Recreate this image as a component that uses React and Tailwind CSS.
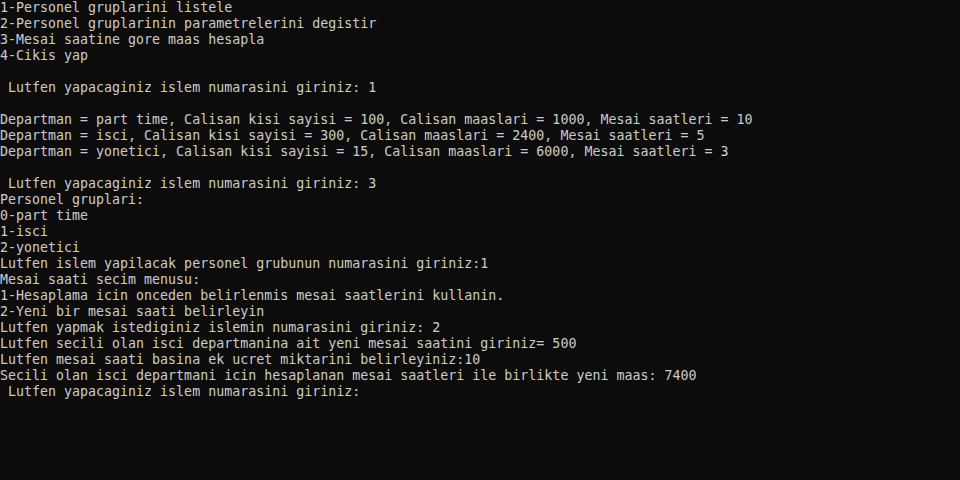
const lines = [
  '1-Personel gruplarini listele',
  '2-Personel gruplarinin parametrelerini degistir',
  '3-Mesai saatine gore maas hesapla',
  '4-Cikis yap',
  '',
  ' Lutfen yapacaginiz islem numarasini giriniz: 1',
  '',
  'Departman = part time, Calisan kisi sayisi = 100, Calisan maaslari = 1000, Mesai saatleri = 10',
  'Departman = isci, Calisan kisi sayisi = 300, Calisan maaslari = 2400, Mesai saatleri = 5',
  'Departman = yonetici, Calisan kisi sayisi = 15, Calisan maaslari = 6000, Mesai saatleri = 3',
  '',
  ' Lutfen yapacaginiz islem numarasini giriniz: 3',
  'Personel gruplari:',
  '0-part time',
  '1-isci',
  '2-yonetici',
  'Lutfen islem yapilacak personel grubunun numarasini giriniz:1',
  'Mesai saati secim menusu:',
  '1-Hesaplama icin onceden belirlenmis mesai saatlerini kullanin.',
  '2-Yeni bir mesai saati belirleyin',
  'Lutfen yapmak istediginiz islemin numarasini giriniz: 2',
  'Lutfen secili olan isci departmanina ait yeni mesai saatini giriniz= 500',
  'Lutfen mesai saati basina ek ucret miktarini belirleyiniz:10',
  'Secili olan isci departmani icin hesaplanan mesai saatleri ile birlikte yeni maas: 7400',
  ' Lutfen yapacaginiz islem numarasini giriniz:',
];

export default function App() {
  return (
    <div className="w-[960px] h-[480px] overflow-hidden bg-[#0c0c0c] text-[#cccccc] font-['DejaVu_Sans_Mono',monospace] text-[13.3px] leading-4">
      {lines.map((line, i) => (
        <div key={i} className="h-4 whitespace-pre">
          {line}
        </div>
      ))}
    </div>
  );
}
